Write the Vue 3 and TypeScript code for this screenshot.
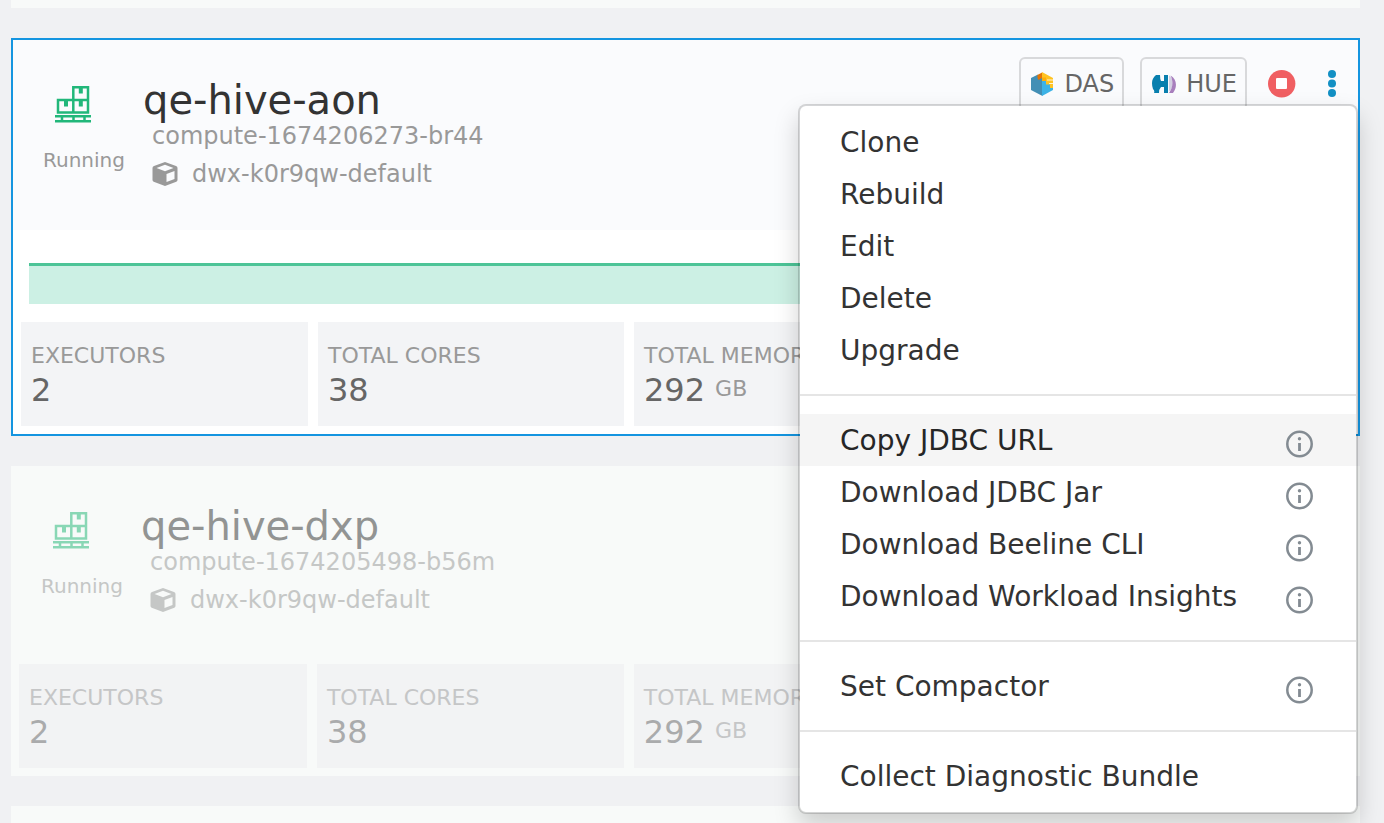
<script setup lang="ts">
interface Metric {
  label: string
  value: string
  unit?: string
}

interface Warehouse {
  name: string
  compute: string
  catalog: string
  status: string
  selected: boolean
  metrics: Metric[]
}

interface MenuEntry {
  label: string
  info?: boolean
  active?: boolean
}

const metrics: Metric[] = [
  { label: 'EXECUTORS', value: '2' },
  { label: 'TOTAL CORES', value: '38' },
  { label: 'TOTAL MEMORY', value: '292', unit: 'GB' },
]

const warehouses: Warehouse[] = [
  {
    name: 'qe-hive-aon',
    compute: 'compute-1674206273-br44',
    catalog: 'dwx-k0r9qw-default',
    status: 'Running',
    selected: true,
    metrics,
  },
  {
    name: 'qe-hive-dxp',
    compute: 'compute-1674205498-b56m',
    catalog: 'dwx-k0r9qw-default',
    status: 'Running',
    selected: false,
    metrics,
  },
]

const menuGroups: MenuEntry[][] = [
  [{ label: 'Clone' }, { label: 'Rebuild' }, { label: 'Edit' }, { label: 'Delete' }, { label: 'Upgrade' }],
  [
    { label: 'Copy JDBC URL', info: true, active: true },
    { label: 'Download JDBC Jar', info: true },
    { label: 'Download Beeline CLI', info: true },
    { label: 'Download Workload Insights', info: true },
  ],
  [{ label: 'Set Compactor', info: true }],
  [{ label: 'Collect Diagnostic Bundle' }],
]
</script>

<template>
  <main class="page">
    <div class="card card-edge-top"></div>

    <article
      v-for="w in warehouses"
      :key="w.name"
      class="card"
      :class="w.selected ? 'selected' : 'dimmed'"
    >
      <header class="head">
        <div class="status">
          <svg class="crates" viewBox="0 0 38 38" width="38" height="38" fill="none" stroke="currentColor" stroke-width="2.5" aria-hidden="true">
            <path d="M19.300 14.500V2.200h14.700v25.300H4v-12.500h30M19.300 15v12.500" />
            <path d="M26.800 2v6.500M12 15v6.500M26.800 15v6.500" stroke-width="4" />
            <path d="M1 31.200h36M1 36.300h36M8 31v5M19.500 31v5M30.500 31v5" />
          </svg>
          <span>{{ w.status }}</span>
        </div>
        <div class="title">
          <h2>{{ w.name }}</h2>
          <p class="compute">{{ w.compute }}</p>
          <p class="catalog">
            <svg viewBox="0 0 26 24" width="26" height="24" fill="currentColor" aria-hidden="true">
              <path
                fill-rule="evenodd"
                d="M13 0 24 4Q25.500 4.500 25.500 6V18Q25.500 19.200 24.300 19.700L13 24 1.700 19.700Q.5 19.200 .5 18V6Q.5 4.500 2 4ZM13 2.800 4.500 6 13 9.300 21.500 6ZM14.500 12V20L22.500 17V9Z"
              />
            </svg>
            <span>{{ w.catalog }}</span>
          </p>
        </div>

        <div v-if="w.selected" class="actions">
          <button type="button" class="tool">
            <svg viewBox="0 0 24 24" width="24" height="24" aria-hidden="true">
              <path d="M0 6 7 2.500 11.500 6V24L0 18Z" fill="#438fb5" />
              <path d="M11 7H22V18L11 24Z" fill="#3db3e6" />
              <path d="M6.500 3 11 .5V6L7.500 8 6.500 6Z" fill="#e37406" />
              <path d="M11 0 22 6V16H19V12.500H15V9H11V6Z" fill="#ffc323" />
              <path d="M11 5.500h4V9h-4Z" fill="#ffad08" />
              <path d="M16 8H22M18 11.500H22" stroke="#fff" stroke-width=".8" />
            </svg>
            <span>DAS</span>
          </button>
          <button type="button" class="tool">
            <svg viewBox="0 0 24 20" width="24" height="20" aria-hidden="true">
              <path d="M4 1H8Q8 5 9 7H12V1h4v18h-4v-6H9Q7 15 7 19H2Q3 17 1 15C-1 9 0 4 4 1Z" fill="#087fae" />
              <path d="M17 1.500c2 .5 3.500 4 3.500 8s-1.500 7-3.500 7.500Z" fill="#d3d0e2" />
              <path d="M18.500 1.500c6.500 3.500 7 12 2.500 17.500h-4c4-5 4.500-12 1.500-17.500Z" fill="#a87fbd" />
            </svg>
            <span>HUE</span>
          </button>
          <button type="button" class="plain stop" aria-label="Stop">
            <svg viewBox="0 0 28 28" width="28" height="28" aria-hidden="true">
              <circle cx="13.700" cy="13.700" r="13.700" fill="#f05f62" />
              <rect x="8" y="8" width="11" height="11" rx="1" fill="#fff" />
            </svg>
          </button>
          <button type="button" class="plain more" aria-label="More actions" aria-expanded="true">
            <svg viewBox="0 0 8 28" width="8" height="28" fill="#1390c4" aria-hidden="true">
              <circle cx="4" cy="4" r="4" />
              <circle cx="4" cy="13.500" r="4" />
              <circle cx="4" cy="23" r="4" />
            </svg>
          </button>
        </div>
      </header>

      <div v-if="w.selected" class="chart"><div class="area"></div></div>

      <dl class="metrics">
        <div v-for="m in w.metrics" :key="m.label" class="metric">
          <dt>{{ m.label }}</dt>
          <dd>{{ m.value }}<small v-if="m.unit">{{ m.unit }}</small></dd>
        </div>
      </dl>

      <div v-if="w.selected" class="menu" role="menu">
        <div v-for="(group, i) in menuGroups" :key="i" class="group" role="group">
          <button
            v-for="entry in group"
            :key="entry.label"
            type="button"
            role="menuitem"
            class="entry"
            :class="{ active: entry.active }"
          >
            <span>{{ entry.label }}</span>
            <svg v-if="entry.info" class="info" viewBox="0 0 28 28" width="28" height="28" aria-hidden="true">
              <circle cx="13.500" cy="14" r="12.200" fill="none" stroke="currentColor" stroke-width="2.500" />
              <circle cx="13.500" cy="8.700" r="1.700" fill="currentColor" />
              <path d="M13.500 13v8" stroke="currentColor" stroke-width="2.800" />
            </svg>
          </button>
        </div>
      </div>
    </article>

    <div class="card card-edge-bottom"></div>
  </main>
</template>

<style>
body {
  margin: 0;
  background: #f0f1f3;
}
</style>

<style scoped>
.page {
  box-sizing: border-box;
  height: 100vh;
  overflow: hidden;
  padding: 0 24px 0 11px;
  display: flex;
  flex-direction: column;
  gap: 30px;
  background: #f0f1f3;
  font-family: "DejaVu Sans", sans-serif;
  color: #333;
}

.card {
  flex: none;
  background: #f8faf9;
}

.card-edge-top {
  height: 8px;
}

.card-edge-bottom {
  flex: 1;
}

.selected {
  position: relative;
  z-index: 1;
  background: #fff;
  border: 2px solid #1495e0;
}

.head {
  box-sizing: border-box;
  min-height: 190px;
  display: flex;
  align-items: flex-start;
  padding: 17px 20px 0 30px;
}

.selected .head {
  background: #fafbfd;
}

.dimmed .head {
  min-height: 198px;
}

.status {
  width: 82px;
  display: flex;
  flex-direction: column;
  gap: 25px;
  padding-top: 28px;
  font-size: 20px;
  line-height: 24px;
  color: #999;
}

.crates {
  margin-left: 11px;
  color: #21b77a;
}

.title {
  flex: 1;
  padding: 20px 0 0 18px;
  color: #999;
  font-size: 24px;
}

.title h2 {
  margin: 0 0 -1px;
  font-size: 40px;
  font-weight: 400;
  line-height: 46px;
  color: #333;
}

.title p {
  margin: 0 0 0 9px;
  line-height: 28px;
}

.title .catalog {
  display: flex;
  align-items: center;
  gap: 14px;
  margin-top: 10px;
}

.dimmed .crates {
  color: #89d7b5;
}

.dimmed .title h2 {
  color: #929493;
}

.dimmed .title,
.dimmed .status {
  color: #c5c7c6;
}

.actions {
  display: flex;
  align-items: center;
}

.tool {
  box-sizing: border-box;
  height: 54px;
  display: flex;
  align-items: center;
  gap: 10px;
  margin-right: 16px;
  padding: 0 8px 0 10px;
  border: 2px solid #d8d9db;
  border-radius: 6px;
  background: transparent;
  color: #666;
  font: 24px "DejaVu Sans", sans-serif;
}

.plain {
  display: flex;
  padding: 0;
  border: 0;
  background: none;
}

.stop {
  margin: 0 32px 0 5px;
}

.more {
  margin-right: 2px;
}

.chart {
  padding: 33px 16px 18px;
}

.area {
  height: 38px;
  border-top: 3px solid #4cc497;
  background: #ccf0e4;
}

.metrics {
  margin: 0;
  padding: 0 8px 8px;
  display: grid;
  grid-template-columns: 287fr 306fr 716fr;
  gap: 10px;
}

.metric {
  box-sizing: border-box;
  height: 104px;
  padding: 20px 10px;
  background: #f3f4f6;
  color: #999;
}

.metric dt {
  font-size: 22px;
  line-height: 28px;
}

.metric dd {
  margin: 0;
  font-size: 32px;
  line-height: 40px;
  color: #666;
}

.metric small {
  margin-left: 10px;
  font-size: 22px;
  vertical-align: 5px;
  line-height: 1;
  color: #999;
}

.dimmed .metric {
  background: #f2f3f4;
  color: #c5c6c7;
}

.dimmed .metric dd {
  color: #aaabac;
}

.dimmed .metric small {
  color: #c5c6c7;
}

.menu {
  position: absolute;
  top: 64px;
  right: 0;
  width: 556px;
  padding: 10px 0;
  border: 2px solid rgba(0, 0, 0, 0.15);
  border-radius: 8px;
  background: #fff;
  background-clip: padding-box;
  box-shadow: 0 12px 24px rgba(0, 0, 0, 0.175);
}

.group + .group {
  margin-top: 18px;
  padding-top: 18px;
  border-top: 2px solid #e5e5e5;
}

.entry {
  box-sizing: border-box;
  width: 100%;
  height: 52px;
  display: flex;
  align-items: center;
  justify-content: space-between;
  padding: 0 42px 0 40px;
  border: 0;
  background: none;
  color: #333;
  font: 28px "DejaVu Sans", sans-serif;
  text-align: left;
}

.entry.active {
  background: #f5f5f5;
  color: #262626;
}

.info {
  margin-top: 8px;
  color: #838b92;
}
</style>
